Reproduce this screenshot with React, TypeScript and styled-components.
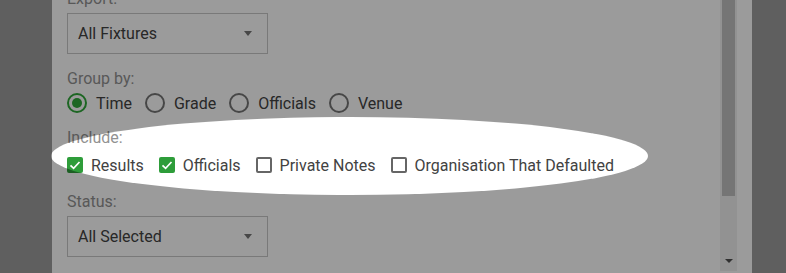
import React from 'react';
import styled, { createGlobalStyle } from 'styled-components';

const GlobalStyle = createGlobalStyle`
    html, body {
        margin: 0;
        padding: 0;
        overflow: hidden;
        background: #9c9c9c;
        font-family: Roboto, "Liberation Sans", sans-serif;
    }
`;

const GREEN = '#2e9d3a';
const TEXT = '#424242';

const Page = styled.div`
    display: flex;
    height: 100vh;
    padding-left: 52px;
    box-sizing: border-box;
`;
const Dialog = styled.div`
    width: 700px;
    height: 100%;
    background: #fff;
    display: flex;
    align-items: flex-start;
    padding-right: 15px;
    box-sizing: border-box;
`;
const ScrollArea = styled.div`
    flex: 1;
    display: flex;
    height: 271px;
    overflow: hidden;
`;
const Content = styled.div`
    flex: 1;
    padding-left: 15px;
    margin-top: -11px;
`;
const Scrollbar = styled.div`
    width: 17px;
    height: 100%;
    background: #f1f1f1;
    display: flex;
    flex-direction: column;
    align-items: center;
`;
const Thumb = styled.div`
    width: 13px;
    height: 196px;
    background: #c1c1c1;
`;
const ScrollArrow = styled.div`
    margin-top: auto;
    margin-bottom: 8px;
    width: 0;
    height: 0;
    border-left: 4px solid transparent;
    border-right: 4px solid transparent;
    border-top: 4px solid #505050;
`;
const Field = styled.div<{ $spacing: number }>`
    margin-bottom: ${p => p.$spacing}px;
`;
const Label = styled.div`
    font-size: 16px;
    line-height: 19px;
    color: #929292;
`;
const Select = styled.div`
    margin-top: 5px;
    width: 201px;
    height: 41px;
    box-sizing: border-box;
    border: 1px solid #c8c8c8;
    display: flex;
    align-items: center;
    justify-content: space-between;
    padding: 0 15px 0 10px;
    font-size: 16px;
    color: ${TEXT};
`;
const Caret = styled.span`
    width: 0;
    height: 0;
    border-left: 4px solid transparent;
    border-right: 4px solid transparent;
    border-top: 5px solid #757575;
`;
const OptionRow = styled.div<{ $offset: number; $gap: number }>`
    display: flex;
    align-items: center;
    gap: ${p => p.$gap}px;
    height: 20px;
    margin-top: ${p => p.$offset}px;
`;
const Option = styled.label<{ $gap: number }>`
    display: flex;
    align-items: center;
    gap: ${p => p.$gap}px;
    font-size: 16px;
    color: ${TEXT};
`;
const RadioMark = styled.span<{ $checked?: boolean }>`
    width: 20px;
    height: 20px;
    box-sizing: border-box;
    border-radius: 50%;
    border: 2px solid ${p => (p.$checked ? '#30a83b' : '#757575')};
    display: flex;
    align-items: center;
    justify-content: center;
    &::after {
        content: '';
        display: ${p => (p.$checked ? 'block' : 'none')};
        width: 10px;
        height: 10px;
        border-radius: 50%;
        background: #30a83b;
    }
`;
const CheckMark = styled.span<{ $checked?: boolean }>`
    width: 16px;
    height: 16px;
    box-sizing: border-box;
    border-radius: 2px;
    border: ${p => (p.$checked ? 'none' : '2px solid #666')};
    background: ${p => (p.$checked ? GREEN : 'transparent')};
    display: flex;
    align-items: center;
    justify-content: center;
`;
const Spotlight = styled.div`
    position: fixed;
    left: 51px;
    top: 117px;
    width: 597px;
    height: 78px;
    border-radius: 50%;
    box-shadow: 0 0 0 2000px rgba(0, 0, 0, 0.392);
    pointer-events: none;
`;

const Radio = ({ label, checked }: { label: string; checked?: boolean }) => (
    <Option $gap={9}>
        <RadioMark $checked={checked} />
        {label}
    </Option>
);

const Checkbox = ({ label, checked }: { label: string; checked?: boolean }) => (
    <Option $gap={8}>
        <CheckMark $checked={checked}>
            {checked && (
                <svg width="16" height="16" viewBox="0 0 16 16">
                    <polyline points="3.5,8.3 6.6,11.3 12.5,5" fill="none" stroke="#fff" strokeWidth="1.7" />
                </svg>
            )}
        </CheckMark>
        {label}
    </Option>
);

export default function App() {
    return (
        <>
            <GlobalStyle />
            <Page>
                <Dialog>
                    <ScrollArea>
                        <Content>
                            <Field $spacing={15}>
                                <Label>Export:</Label>
                                <Select>
                                    All Fixtures
                                    <Caret />
                                </Select>
                            </Field>
                            <Field $spacing={15}>
                                <Label>Group by:</Label>
                                <OptionRow $offset={5} $gap={13}>
                                    <Radio label="Time" checked />
                                    <Radio label="Grade" />
                                    <Radio label="Officials" />
                                    <Radio label="Venue" />
                                </OptionRow>
                            </Field>
                            <Field $spacing={17}>
                                <Label>Include:</Label>
                                <OptionRow $offset={8} $gap={15}>
                                    <Checkbox label="Results" checked />
                                    <Checkbox label="Officials" checked />
                                    <Checkbox label="Private Notes" />
                                    <Checkbox label="Organisation That Defaulted" />
                                </OptionRow>
                            </Field>
                            <Field $spacing={15}>
                                <Label>Status:</Label>
                                <Select>
                                    All Selected
                                    <Caret />
                                </Select>
                            </Field>
                        </Content>
                        <Scrollbar>
                            <Thumb />
                            <ScrollArrow />
                        </Scrollbar>
                    </ScrollArea>
                </Dialog>
            </Page>
            <Spotlight />
        </>
    );
}
